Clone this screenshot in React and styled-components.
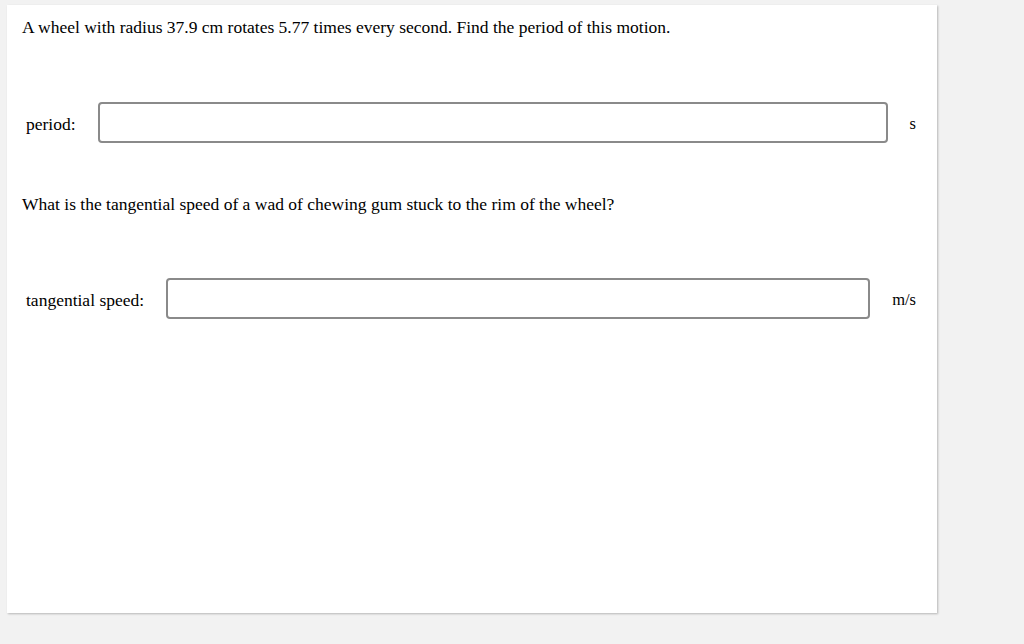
import React from 'react';
import styled, { createGlobalStyle } from 'styled-components';

const GlobalStyle = createGlobalStyle`
  html, body {
    margin: 0;
    padding: 0;
    background: #f2f2f2;
  }
  body {
    font-family: "Liberation Serif", "Times New Roman", serif;
    color: #000;
  }
`;

const Page = styled.div`
  padding: 5px 0 0 7px;
  height: 639px;
`;

const Card = styled.div`
  width: 930px;
  height: 608px;
  box-sizing: border-box;
  background: #fff;
  box-shadow: 1px 1px 2px rgba(0, 0, 0, 0.25);
  padding: 13px 21px 0 15px;
`;

const Question = styled.p`
  margin: ${(p) => p.$top || 0}px 0 0;
  font-size: 17.5px;
  line-height: 18px;
`;

const Row = styled.div`
  display: flex;
  align-items: center;
  gap: 22px;
  margin-top: ${(p) => p.$top}px;
  padding-left: 4px;
  font-size: 17.5px;
`;

const Label = styled.span`
  white-space: nowrap;
  padding-top: 3px;
`;

const Input = styled.input`
  flex: 1;
  height: 41px;
  box-sizing: border-box;
  border: 2px solid #8a8a8a;
  border-radius: 4px;
  background: #fff;
  outline: none;
`;

const Unit = styled.span`
  white-space: nowrap;
  font-size: 16.5px;
  padding-top: 3px;
`;

const App = () => (
  <>
    <GlobalStyle />
    <Page>
      <Card>
        <Question>
          A wheel with radius 37.9 cm rotates 5.77 times every second. Find the period of this motion.
        </Question>
        <Row $top={66}>
          <Label>period:</Label>
          <Input type="text" />
          <Unit>s</Unit>
        </Row>
        <Question $top={52}>
          What is the tangential speed of a wad of chewing gum stuck to the rim of the wheel?
        </Question>
        <Row $top={65}>
          <Label>tangential speed:</Label>
          <Input type="text" />
          <Unit>m/s</Unit>
        </Row>
      </Card>
    </Page>
  </>
);

export default App;
